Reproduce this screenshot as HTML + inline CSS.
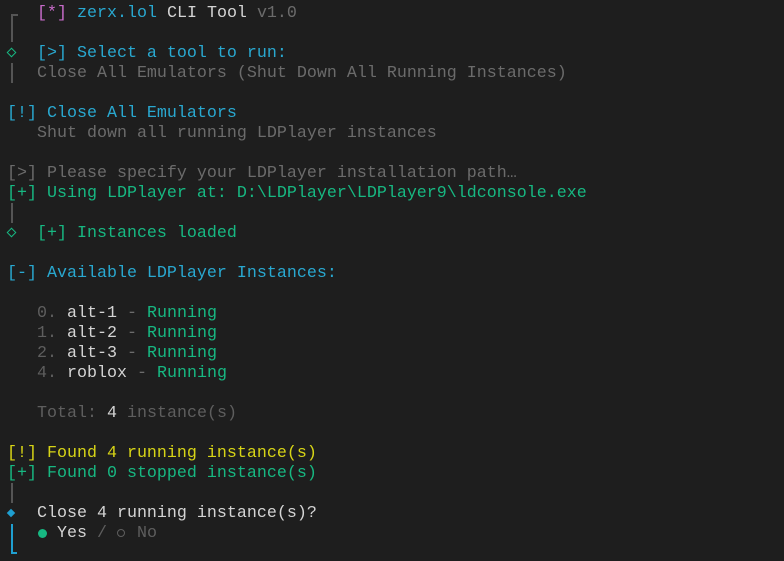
<!DOCTYPE html>
<html><head><meta charset="utf-8"><style>
html,body{margin:0;padding:0;background:#1e1e1e;width:784px;height:561px;overflow:hidden}
body{position:relative;font-family:"Liberation Mono","DejaVu Sans Mono",monospace;font-size:16.67px}
.l{position:absolute;left:7px;height:20px;line-height:20px;white-space:pre;color:#cccccc}
.g{color:#6b6b6b}.w{color:#d4d4d4}.c{color:#29a8d0}.m{color:#c76bc9}.gr{color:#17b882}.y{color:#d7d416}.dg{color:#5e5e5e}
.bar{position:absolute;left:11px;width:2px;background:#555}
.cb{position:absolute;background:#1f9fd0}
.dia{position:absolute;left:8px;width:5px;height:5px;transform:rotate(45deg);border:1.5px solid #17b882;box-sizing:content-box}
</style></head><body>
<div class="bar" style="top:14px;height:28px"></div>
<div class="bar" style="top:14px;height:2px;width:7px"></div>
<div class="l" style="top:4px">   <span class="m">[*]</span> <span class="c">zerx.lol</span> <span class="w">CLI Tool</span> <span class="g">v1.0</span></div>
<div class="dia" style="top:49px"></div>
<div class="l c" style="top:44px">   [&gt;] Select a tool to run:</div>
<div class="bar" style="top:63px;height:20px"></div>
<div class="l g" style="top:64px">   Close All Emulators (Shut Down All Running Instances)</div>
<div class="l c" style="top:104px">[!] Close All Emulators</div>
<div class="l g" style="top:124px">   Shut down all running LDPlayer instances</div>
<div class="l g" style="top:164px">[&gt;] Please specify your LDPlayer installation path…</div>
<div class="l gr" style="top:184px">[+] Using LDPlayer at: D:\LDPlayer\LDPlayer9\ldconsole.exe</div>
<div class="bar" style="top:203px;height:20px"></div>
<div class="dia" style="top:229px"></div>
<div class="l gr" style="top:224px">   [+] Instances loaded</div>
<div class="l c" style="top:264px">[-] Available LDPlayer Instances:</div>
<div class="l" style="top:304px">   <span class="dg">0.</span> <span class="w">alt-1</span> <span class="g">-</span> <span class="gr">Running</span></div>
<div class="l" style="top:324px">   <span class="dg">1.</span> <span class="w">alt-2</span> <span class="g">-</span> <span class="gr">Running</span></div>
<div class="l" style="top:344px">   <span class="dg">2.</span> <span class="w">alt-3</span> <span class="g">-</span> <span class="gr">Running</span></div>
<div class="l" style="top:364px">   <span class="dg">4.</span> <span class="w">roblox</span> <span class="g">-</span> <span class="gr">Running</span></div>
<div class="l" style="top:404px">   <span class="dg">Total:</span> <span class="w">4</span> <span class="dg">instance(s)</span></div>
<div class="l y" style="top:444px">[!] Found 4 running instance(s)</div>
<div class="l gr" style="top:464px">[+] Found 0 stopped instance(s)</div>
<div class="bar" style="top:483px;height:20px"></div>
<div style="position:absolute;left:8px;top:510px;width:6px;height:6px;background:#1f9fd0;transform:rotate(45deg)"></div>
<div class="l w" style="top:504px">   Close 4 running instance(s)?</div>
<div class="cb" style="left:11px;top:524px;width:2px;height:30px"></div>
<div class="cb" style="left:11px;top:552px;width:6px;height:2px"></div>
<div style="position:absolute;left:38px;top:529px;width:9px;height:9px;border-radius:50%;background:#17b882"></div>
<div class="l" style="top:524px">     <span class="w">Yes</span> <span class="dg">/</span>   <span class="dg">No</span></div>
<div style="position:absolute;left:117px;top:529px;width:6px;height:6px;border-radius:50%;border:1.5px solid #5e5e5e"></div>
</body></html>
